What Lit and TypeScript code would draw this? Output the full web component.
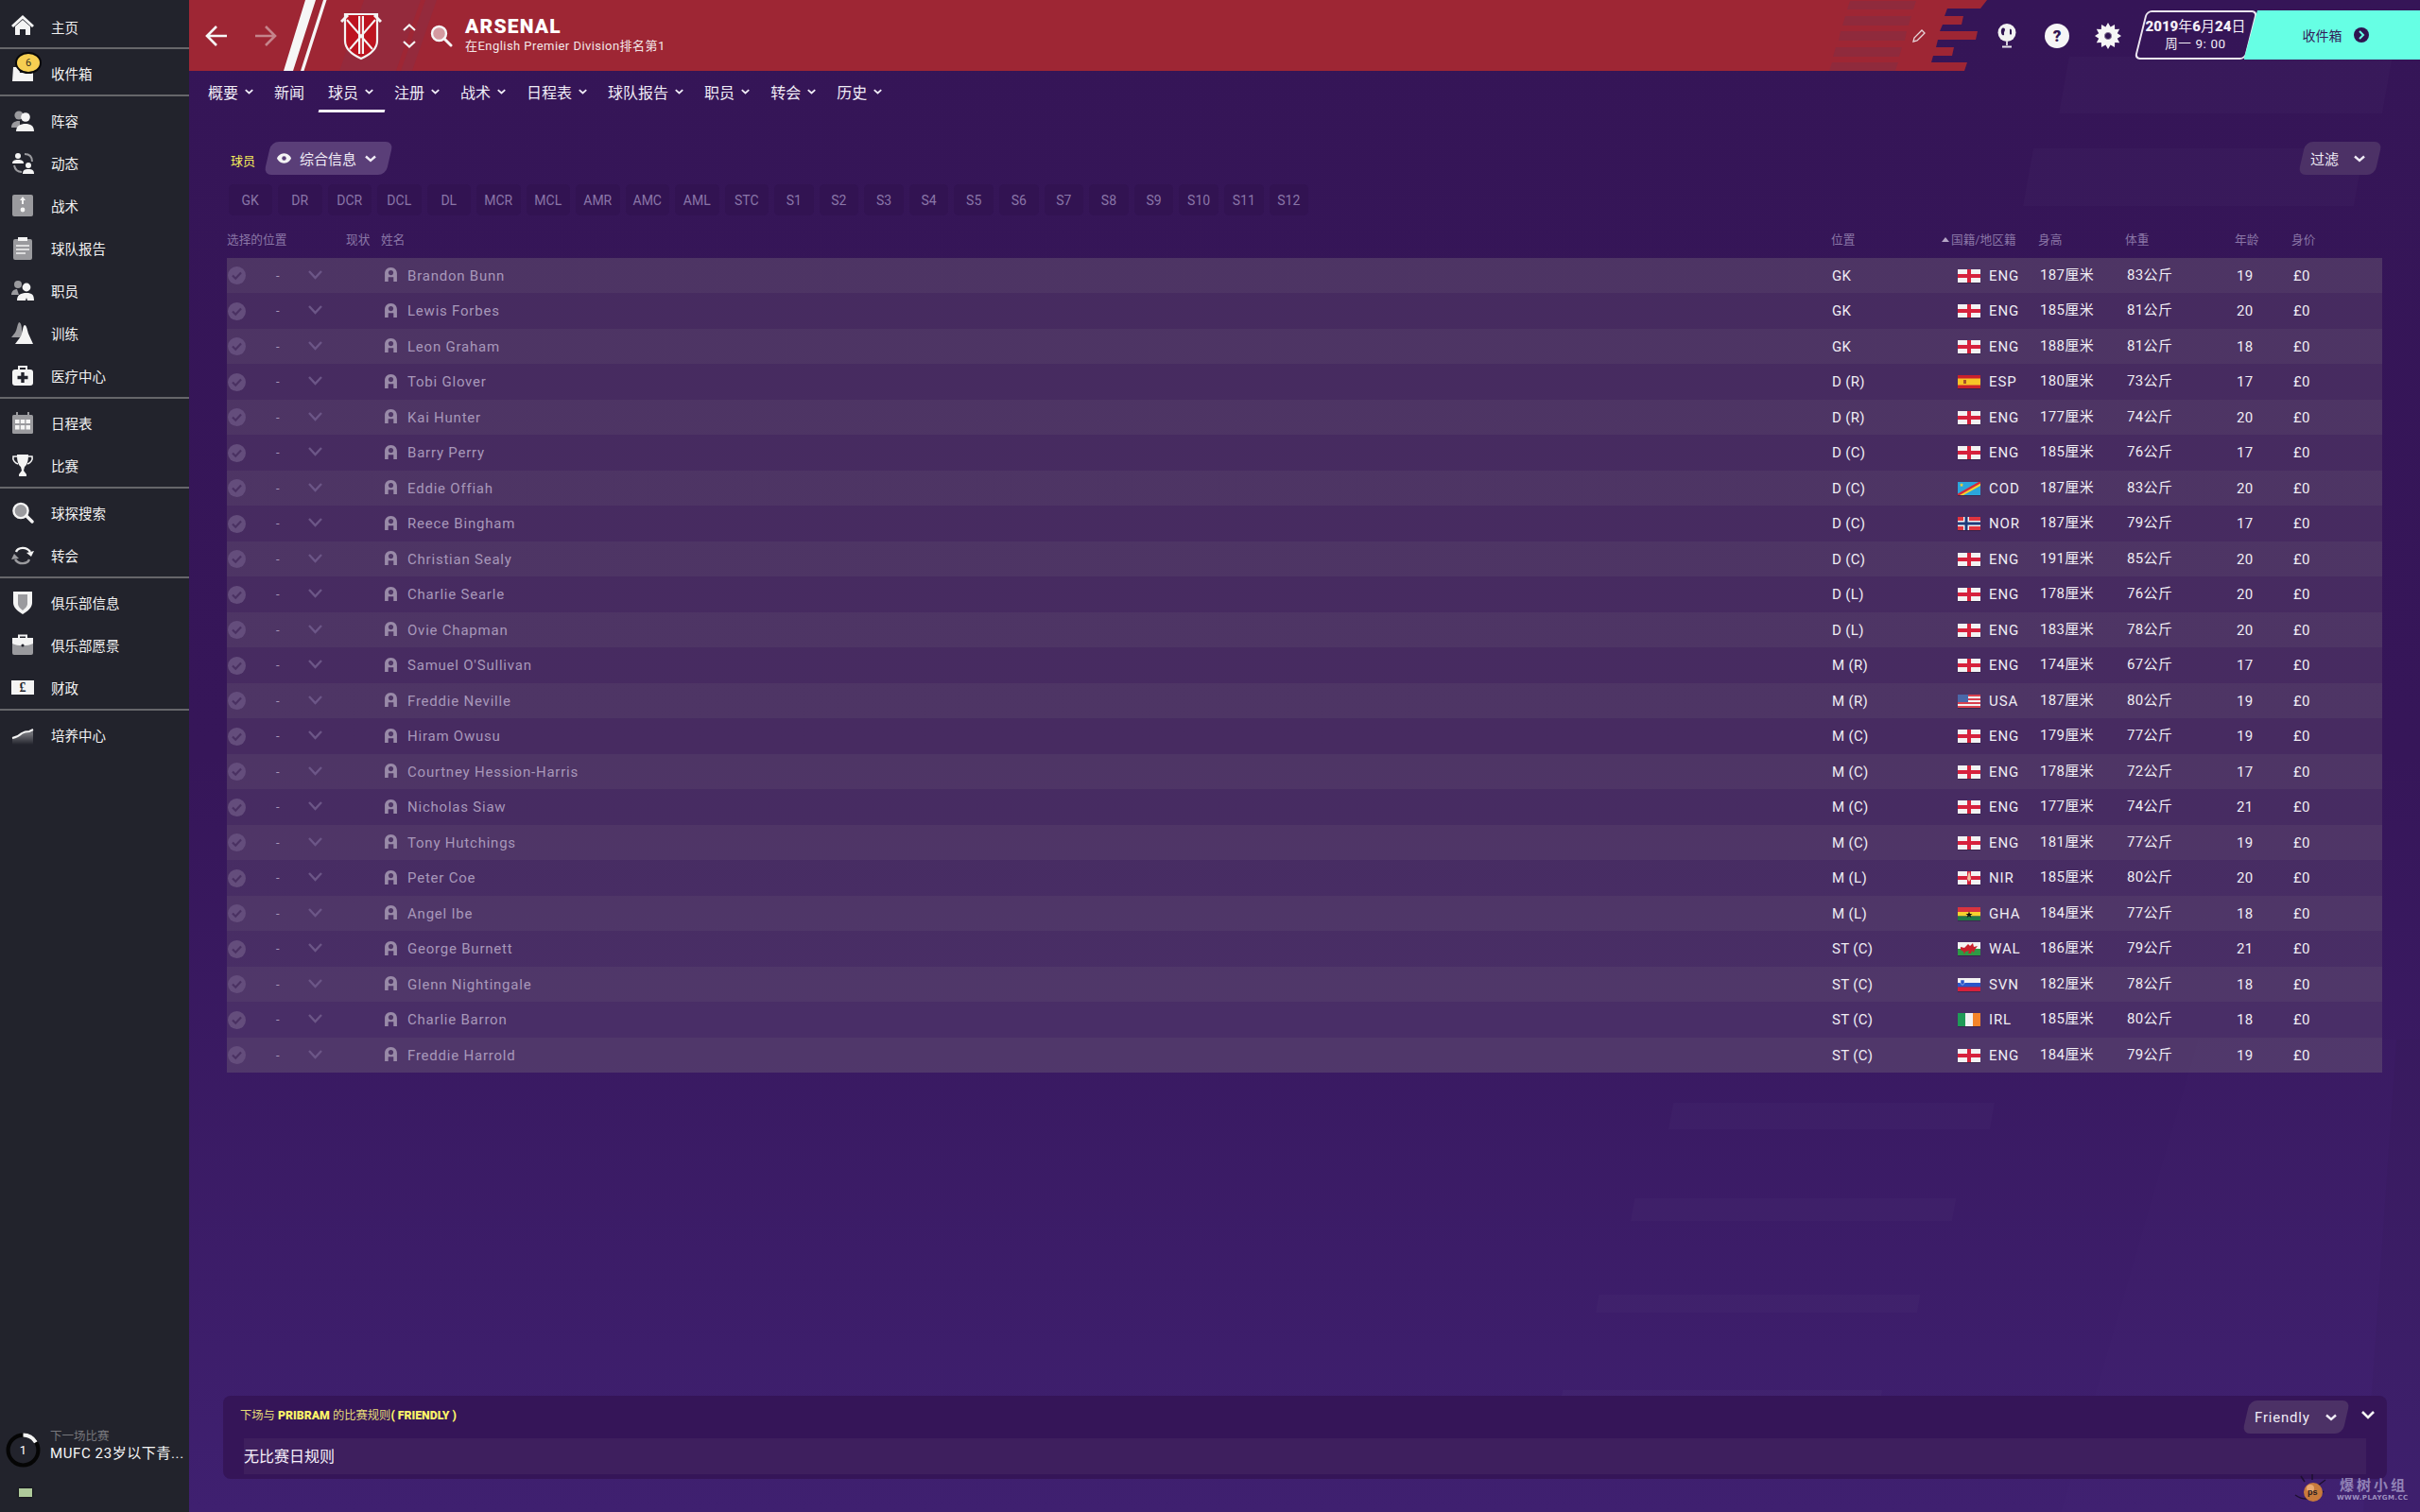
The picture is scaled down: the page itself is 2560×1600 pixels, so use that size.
import { LitElement, html, css, svg } from "lit";
import { customElement } from "lit/decorators.js";

const W = "#f4f4f4";
const G = "#9a9a9e";
const icons: Record<string, any> = {
  home: svg`<path fill="${W}" d="M12 0 0 11l2 2L12 4l10 9 2-2z"/><path fill="${W}" d="M4 12l8-7 8 7v9h-5v-6H9v6H4z"/>`,
  inbox: svg`<path fill="${W}" d="M2 5h6l1 6h7l4-6h3v15H1z"/><path fill="${G}" d="M6 0h13l-3 8H9z"/>`,
  squad: svg`<circle cx="8" cy="6" r="4.6" fill="${G}"/><path fill="${G}" d="M0 19c0-5 3-6 6-7l3 0v7z"/><circle cx="15" cy="8" r="4.8" fill="${W}"/><path fill="${W}" d="M5 23c0-6 5-8 10-8s9 2 9 8z"/>`,
  dyn: svg`<circle cx="7" cy="4" r="3" fill="${W}"/><path fill="${W}" d="M1 12c0-3 2-4 6-4s6 1 6 4z"/><circle cx="18" cy="14" r="3" fill="${W}"/><path fill="${W}" d="M12 23c0-4 2-5 6-5s6 1 6 5z"/><path fill="none" stroke="${G}" stroke-width="2" d="M14 2c5 0 8 3 8 8M3 14c1 5 4 7 8 7"/>`,
  tac: svg`<rect x="1" y="0" width="22" height="23" rx="2" fill="${G}"/><path fill="${W}" d="M12 2l3 4h-2v4h-2V6H9z"/><circle cx="12" cy="16" r="2.4" fill="${W}"/>`,
  rep: svg`<rect x="2" y="2" width="20" height="22" rx="2" fill="${G}"/><rect x="7" y="0" width="10" height="4" fill="${W}"/><path stroke="${W}" stroke-width="1.5" d="M5 9h14M5 13h14M5 17h10"/>`,
  staff: svg`<circle cx="7" cy="5" r="4" fill="${G}"/><path fill="${G}" d="M0 16c0-4 3-6 6-6l2 6z"/><circle cx="16" cy="8" r="4.4" fill="${W}"/><path fill="${W}" d="M6 22c0-6 4-8 10-8s8 2 8 8h-7l-1-3-1 3z"/>`,
  train: svg`<path fill="${G}" d="M8 0c2 0 3 4 3 8l2 8H0l4-5c2-3 2-8 4-11z"/><path fill="${W}" d="M14 3c2 0 3 5 4 9l5 11H4l6-8c2-3 2-12 4-12z"/>`,
  med: svg`<path fill="none" stroke="${W}" stroke-width="2" d="M8 5V2h8v3"/><rect x="1" y="5" width="22" height="17" rx="3" fill="${W}"/><path stroke="#22232c" stroke-width="3.4" d="M12 8v11M6.5 13.5h11"/>`,
  cal: svg`<rect x="1" y="3" width="22" height="20" rx="1.5" fill="${G}"/><path stroke="${G}" stroke-width="2" d="M6 0v4M18 0v4"/><path fill="${W}" d="M4 8h4.5v4H4zm5.8 0h4.4v4H9.8zm5.7 0H20v4h-4.5zM4 14h4.5v4.500H4zm5.800 0h4.400v4.500H9.800zm5.700 0H20v4.500h-4.500z"/>`,
  cup: svg`<path fill="${W}" d="M6 0h12c0 3 0 10-4 13l-1 4 3 4v2H8v-2l3-4-1-4C6 10 6 3 6 0z"/><path fill="none" stroke="${W}" stroke-width="1.600" d="M6 2H2c-1 4 2 7 5 8M18 2h4c1 4-2 7-5 8"/>`,
  search: svg`<circle cx="10" cy="9.500" r="7.600" fill="${G}" stroke="${W}" stroke-width="2.400"/><path stroke="${W}" stroke-width="3.400" stroke-linecap="round" d="M16 15l6 6"/>`,
  trans: svg`<path fill="none" stroke="${W}" stroke-width="2.400" d="M5 8c2-5 11-6 15 0"/><path fill="${W}" d="M24 7l-3 6-5-4z"/><path fill="none" stroke="${G}" stroke-width="2.400" d="M19 16c-2 5-11 6-15 0"/><path fill="${G}" d="M0 16l3-6 5 5z"/>`,
  shield: svg`<path fill="${W}" d="M2 0h20v12c0 5-5 9-10 12C7 21 2 17 2 12z"/><path fill="${G}" d="M7 3h10v10c0 3-3 5-5 7-2-2-5-4-5-7z"/>`,
  brief: svg`<path fill="none" stroke="${W}" stroke-width="2" d="M8 5V1.500h8V5"/><rect x="1" y="4" width="22" height="18" rx="2" fill="${G}"/><path fill="${W}" d="M1 4h22v6c-6 3-16 3-22 0z"/><circle cx="12" cy="12" r="1.600" fill="#22232c"/>`,
  dev: svg`<linearGradient id="dv" x1="0" y1="0" x2="0" y2="1"><stop offset=".3" stop-color="#fff"/><stop offset="1" stop-color="#fff" stop-opacity="0"/></linearGradient><path fill="url(#dv)" d="M1 15c5-1 7-2 10-5 3-2 6-2 8-2l4-2v16H1z" opacity=".35"/><path fill="none" stroke="${W}" stroke-width="2" d="M1 15c5-1 7-2 10-5 3-2 6-2 8-2l4-2"/>`,
};

const side: (null | [string, string])[] = [
  ["home", "主页"], null, ["inbox", "收件箱"], null,
  ["squad", "阵容"], ["dyn", "动态"], ["tac", "战术"], ["rep", "球队报告"], ["staff", "职员"], ["train", "训练"], ["med", "医疗中心"], null,
  ["cal", "日程表"], ["cup", "比赛"], null,
  ["search", "球探搜索"], ["trans", "转会"], null,
  ["shield", "俱乐部信息"], ["brief", "俱乐部愿景"], ["money", "财政"], null,
  ["dev", "培养中心"],
];

const flags: Record<string, any> = {
  ENG: svg`<rect width="24" height="14" fill="#f2f2f2"/><path fill="#d6213c" d="M10 0h4v14h-4zM0 5h24v4H0z"/>`,
  ESP: svg`<rect width="24" height="14" fill="#c9202c"/><rect y="3.500" width="24" height="7" fill="#f6c427"/><rect x="6" y="5" width="3" height="4" fill="#a5502c"/>`,
  COD: svg`<rect width="24" height="14" fill="#2ba6dc"/><path fill="#f6d22e" d="M0 14 24 1v3L6 14zM24 0v1L0 14v-1z"/><path fill="#d6283a" d="M0 12.500 22 0h2v1.500L2 14H0z"/><path fill="#f6d22e" d="M4 1l.7 1.500 1.500.1-1.200 1 .4 1.500L4 4.300 2.700 5.100l.4-1.500-1.200-1 1.500-.1z"/>`,
  NOR: svg`<rect width="24" height="14" fill="#e0353f"/><path fill="#f2f2f2" d="M6 0h6v14H6zM0 4h24v6H0z"/><path fill="#1f3a7a" d="M7.500 0h3v14h-3zM0 5.500h24v3H0z"/>`,
  USA: svg`<rect width="24" height="14" fill="#f2f2f2"/><path fill="#d8404e" d="M0 0h24v2H0zm0 4h24v2H0zm0 4h24v2H0zm0 4h24v2H0z"/><rect width="11" height="8" fill="#4a68a8"/>`,
  NIR: svg`<rect width="24" height="14" fill="#f2f2f2"/><path fill="#d6213c" d="M10 0h4v14h-4zM0 5h24v4H0z"/><path fill="#f0c0a0" d="M11 3l1-3 1 3 1 5-2 3-2-3z"/>`,
  GHA: svg`<rect width="24" height="5" fill="#d8343f"/><rect y="5" width="24" height="4.500" fill="#f6d22e"/><rect y="9.500" width="24" height="4.500" fill="#1f7a45"/><path fill="#111" d="M12 4.500l1 2.500 2.500.1-2 1.500.8 2.400-2.300-1.400-2.300 1.400.8-2.400-2-1.500 2.500-.1z"/>`,
  WAL: svg`<rect width="24" height="7" fill="#f2f2f2"/><rect y="7" width="24" height="7" fill="#2e9a45"/><path fill="#c9202c" d="M3 5l4 1 4-4 2 2 3-3 1 4 4-1-3 4-1 3-2-2-1 3h-3l1-3-4 1-1 3-1-3-3-2z"/>`,
  SVN: svg`<rect width="24" height="5" fill="#f2f2f2"/><rect y="5" width="24" height="4.500" fill="#2a55c8"/><rect y="9.500" width="24" height="4.500" fill="#d6213c"/><path fill="#2a55c8" d="M3 2h4v3c0 1-1 2-2 2S3 6 3 5z" stroke="#f2f2f2" stroke-width=".5"/>`,
  IRL: svg`<rect width="8" height="14" fill="#1f9a57"/><rect x="8" width="8" height="14" fill="#f2f2f2"/><rect x="16" width="8" height="14" fill="#f5842a"/>`,
};

const players: string[][] = [
  ["Brandon Bunn","GK","ENG","187","83","19"],["Lewis Forbes","GK","ENG","185","81","20"],["Leon Graham","GK","ENG","188","81","18"],
  ["Tobi Glover","D (R)","ESP","180","73","17"],["Kai Hunter","D (R)","ENG","177","74","20"],["Barry Perry","D (C)","ENG","185","76","17"],
  ["Eddie Offiah","D (C)","COD","187","83","20"],["Reece Bingham","D (C)","NOR","187","79","17"],["Christian Sealy","D (C)","ENG","191","85","20"],
  ["Charlie Searle","D (L)","ENG","178","76","20"],["Ovie Chapman","D (L)","ENG","183","78","20"],["Samuel O'Sullivan","M (R)","ENG","174","67","17"],
  ["Freddie Neville","M (R)","USA","187","80","19"],["Hiram Owusu","M (C)","ENG","179","77","19"],["Courtney Hession-Harris","M (C)","ENG","178","72","17"],
  ["Nicholas Siaw","M (C)","ENG","177","74","21"],["Tony Hutchings","M (C)","ENG","181","77","19"],["Peter Coe","M (L)","NIR","185","80","20"],
  ["Angel Ibe","M (L)","GHA","184","77","18"],["George Burnett","ST (C)","WAL","186","79","21"],["Glenn Nightingale","ST (C)","SVN","182","78","18"],
  ["Charlie Barron","ST (C)","IRL","185","80","18"],["Freddie Harrold","ST (C)","ENG","184","79","19"],
];

const nav: [string, boolean][] = [["概要",true],["新闻",false],["球员",true],["注册",true],["战术",true],["日程表",true],["球队报告",true],["职员",true],["转会",true],["历史",true]];
const posBtns = ["GK","DR","DCR","DCL","DL","MCR","MCL","AMR","AMC","AML","STC"];
const sBtns = ["S1","S2","S3","S4","S5","S6","S7","S8","S9","S10","S11","S12"];

const chev = (cls = "chev") => html`<svg class=${cls} viewBox="0 0 12 8"><path d="M1 1.500 6 6l5-4.500" fill="none" stroke="currentColor" stroke-width="2.400"/></svg>`;

const decor: number[][] = [
  [2140,157,2490,218],[1765,1167,2105,1195],[1725,1268,2065,1292],[1688,1370,2028,1389],[1652,1471,1990,1477],
  [2178,60,2520,120],
];

@customElement("app-root")
export class AppRoot extends LitElement {
  static styles = css`
    :host { display: block; width: 2560px; height: 1600px; overflow: hidden; font-family: Roboto, "Noto Sans CJK SC", sans-serif; color: #f0edf4; }
    * { box-sizing: border-box; }
    .page { display: flex; width: 2560px; height: 1600px; }
    .side { width: 200px; flex: none; background: #22232c; display: flex; flex-direction: column; position: relative; color: #f2f2f2; }
    .si { height: 45px; display: flex; align-items: center; font-size: 14.500px; padding-left: 12px; flex: none; }
    .si svg { width: 24px; height: 24px; margin-right: 18px; flex: none; }
    .sep { height: 2px; background: #66666a; margin: 0 0 3px; flex: none; }
    .si.first { height: 50px; padding-top: 6px; }
    .si.inb { position: relative; }
    .money { width: 24px; height: 15px; margin-right: 18px; background: #f4f4f4; display: flex; align-items: center; justify-content: center; color: #22232c; font: 700 14px "Liberation Serif", serif; flex: none; }
    .badge { position: absolute; left: 16px; top: 0; width: 28px; height: 23px; border-radius: 50%; background: #f6cf52; border: 2.500px solid #08080a; color: #3a3320; font-size: 11px; display: flex; align-items: center; justify-content: center; }
    .next { position: absolute; left: 0; right: 0; bottom: 0; height: 95px; }
    .ring { position: absolute; left: 6px; top: 11px; width: 37px; height: 37px; }
    .ring-n { position: absolute; left: 6px; top: 11px; width: 37px; height: 37px; display: flex; align-items: center; justify-content: center; font-size: 13px; color: #fff; }
    .nx1 { position: absolute; left: 53px; top: 7px; font-size: 12.500px; line-height: 16px; color: #77777c; }
    .nx2 { position: absolute; left: 53px; top: 23px; font-size: 15px; line-height: 20px; letter-spacing: .6px; color: #f6f6f6; white-space: nowrap; }
    .sq { position: absolute; left: 20px; bottom: 16px; width: 14px; height: 9px; background: #aec99a; box-shadow: 0 0 2px #000; }

    .main { flex: 1; position: relative; display: flex; flex-direction: column; background: linear-gradient(180deg, #351557 0%, #361659 50%, #3f2070 100%); }
    .decor { position: absolute; left: -200px; top: 0; width: 2560px; height: 1600px; pointer-events: none; }
    .main > :not(.decor) { position: relative; }

    .head { height: 75px; flex: none; display: flex; align-items: center; padding-left: 17px; }
    .hbg { position: absolute; left: 0; top: 0; width: 2360px; height: 75px; }
    .arrow { width: 24px; height: 24px; flex: none; position: relative; }
    .arrow.dim { margin-left: 28px; opacity: .45; }
    .crest { width: 44px; height: 52px; margin-left: 67px; flex: none; position: relative; }
    .updown { width: 14px; margin-left: 22px; display: flex; flex-direction: column; gap: 10px; color: #f4f4f4; position: relative; }
    .updown svg { width: 14px; height: 8px; display: block; }
    .hsearch { width: 24px; height: 24px; margin-left: 15px; flex: none; position: relative; }
    .htitle { margin-left: 13px; display: flex; flex-direction: column; width: 400px; position: relative; }
    .club { font-size: 21px; font-weight: 900; letter-spacing: 1.200px; line-height: 24px; color: #fff; margin-top: -2px; }
    .sub { font-size: 13px; line-height: 18px; letter-spacing: .45px; color: #f3e6e8; white-space: nowrap; }
    .pencil { position: absolute; left: 1822px; top: 30px; width: 16px; height: 16px; }
    .hicon { position: absolute; top: 24px; width: 28px; height: 28px; }
    .globe { left: 1909px; }
    .gear { left: 2016px; }
    .qm { position: absolute; left: 1963px; top: 25px; width: 26px; height: 26px; border-radius: 50%; background: #f6f6f6; color: #2f1450; font-weight: 900; font-size: 17px; display: flex; align-items: center; justify-content: center; }
    .clock { position: absolute; left: 2057px; top: 11px; width: 303px; height: 52px; display: flex; }
    .date { width: 131px; flex: none; position: relative; display: flex; flex-direction: column; align-items: center; justify-content: center; color: #f4eff7; }
    .date::before { content: ""; position: absolute; top: 0; bottom: 0; left: 6.500px; right: 6.500px; border: 2px solid #ece6f0; border-radius: 6px; transform: skewX(-14deg); }
    .d1 { font-size: 15px; line-height: 19px; position: relative; white-space: nowrap; }
    .d1 b { font-weight: 900; }
    .d2 { font-size: 13.500px; line-height: 17px; position: relative; letter-spacing: .6px; }
    .mint { width: 186.500px; margin-left: -14.500px; background: #66ffe4; clip-path: polygon(14.500px 0, 100% 0, 100% 100%, 0 100%); color: #34205a; font-size: 14px; display: flex; align-items: center; padding-left: 62px; gap: 12px; }
    .goc { width: 16px; height: 16px; flex: none; }

    .nav { height: 45px; flex: none; display: flex; align-items: center; padding-left: 20px; gap: 22px; font-size: 16px; color: #f0ecf6; }
    .navi { display: flex; align-items: center; height: 45px; position: relative; padding-bottom: 2px; }
    .navi .chev { width: 9px; height: 6px; margin-left: 7px; }
    .navi.plain { margin-right: 3px; }
    .navi.on::after { content: ""; position: absolute; left: -10px; right: -12px; bottom: 1px; height: 3px; background: #f4f0f8; transform: skewX(-14deg); }
    .chev { width: 12px; height: 8px; }

    .content { flex: 1; padding: 30px 0 0 40px; display: flex; flex-direction: column; }
    .trow { height: 35px; display: flex; align-items: center; position: relative; width: 2280px; flex: none; }
    .plabel { font-size: 13px; color: #f6ee5a; margin-left: 4px; width: 35px; position: relative; top: 2px; }
    .pill { position: relative; height: 35px; display: flex; align-items: center; font-size: 15px; color: #f0ecf6; z-index: 0; }
    .pill::before { content: ""; position: absolute; inset: 0 4px; border-radius: 8px; background: var(--pb, #5a3e78); transform: skewX(-13deg); z-index: -1; }
    .p1 { width: 137px; padding-left: 14px; }
    .p1 .eye { width: 15px; height: 11px; margin-right: 9px; }
    .p1 .chev { margin-left: 9px; }
    .p2 { --pb: #4c3166; width: 89px; margin-left: auto; padding-left: 13px; }
    .p2 .chev { margin-left: 16px; }
    .filters { display: flex; gap: 6px; margin-top: 10px; height: 33px; flex: none; padding-left: 1.500px; }
    .fb { height: 33px; border-radius: 5px; background: #321352; color: #8a76a8; font-size: 14px; display: flex; align-items: center; justify-content: center; flex: none; width: 46.500px; }
    .fb.s { width: 41.600px; }
    .thead { height: 45px; flex: none; display: grid; grid-template-columns: 126px 37px 1534px 117px 102px 92px 116px 60px 94px; font-size: 12.700px; color: #8a76a6; align-items: end; padding-bottom: 10px; line-height: 18px; }
    .thead .nw { white-space: nowrap; }
    .tri { display: inline-block; width: 0; height: 0; border: 4px solid transparent; border-top: 0; border-bottom: 5px solid #b3a4c4; margin: 0 2px 2px 0; }
    .row { display: grid; grid-template-columns: 52px 34px 80px 25px 1507px 133px 33px 54px 92px 116px 60px 94px; align-items: center; width: 2280px; height: 38px; font-size: 15px; line-height: 18px; letter-spacing: .35px; background: rgba(115,100,120,.28); }
    .row.o { height: 37px; background: rgba(115,100,120,.4); }
    .ck { width: 19px; height: 19px; margin-left: 1px; }
    .da { color: #a796b8; font-size: 13px; }
    .rc { width: 15px; height: 10px; color: #6c5687; position: relative; top: -1px; }
    .pr { width: 15px; height: 15px; position: relative; top: -1px; }
    .nm { color: #a898ba; white-space: nowrap; letter-spacing: .78px; }
    .nat { letter-spacing: .9px; }
    .cj { position: relative; top: -1px; }
    .fl { width: 24px; height: 14px; display: block; box-shadow: 0 1px 0 rgba(0,0,0,.25); }

    .rules { position: absolute !important; left: 36px; top: 1477px; width: 2289px; height: 88px; background: #351558; border-radius: 8px; }
    .rt { position: absolute; left: 18px; top: 12px; font-size: 12.300px; line-height: 18px; color: #e6dc78; white-space: nowrap; }
    .rt b { font-weight: 900; color: #fcf468; }
    .rbox { position: absolute; left: 22px; right: 22px; top: 45px; height: 38px; background: #3e1f5e; display: flex; align-items: center; font-size: 16px; color: #f6f0fa; padding-bottom: 2px; }
    .p3 { position: absolute !important; left: 2136px; top: 5px; width: 114px; --pb: #4c3166; padding-left: 13px; letter-spacing: .8px; }
    .p3 .chev { margin-left: 16px; }
    .rchev { position: absolute; left: 2262px; top: 16px; width: 14px; height: 9px; color: #f4f4f4; }
    .wm { position: absolute !important; left: 2273px; top: 1556px; width: 80px; height: 44px; color: #a79cc8; }
    .wm1 { position: absolute; left: 2px; top: 5px; font: 700 15px/20px "Noto Sans CJK SC", serif; letter-spacing: 3px; white-space: nowrap; opacity: .8; }
    .wm2 { position: absolute; left: -1px; top: 24px; font: 700 7px/10px "DejaVu Sans", sans-serif; letter-spacing: .4px; white-space: nowrap; opacity: .9; }
    .orb { position: absolute !important; left: 2226px; top: 1560px; width: 40px; height: 36px; }
    .orbt { position: absolute !important; left: 2241px; top: 1574px; font: 700 9px/10px "Liberation Sans", sans-serif; color: #2a1a20; }
  `;

  private sideItems() {
    return side.map((s) => {
      if (!s) return html`<div class="sep"></div>`;
      const [ic, t] = s;
      const cls = ic === "home" ? "si first" : ic === "inbox" ? "si inb" : "si";
      return html`<div class=${cls}>
        ${ic === "money"
          ? html`<div class="money">£</div>`
          : html`<svg viewBox="0 0 24 24">${icons[ic]}</svg>`}
        <span>${t}</span>
        ${ic === "inbox" ? html`<div class="badge">6</div>` : ""}
      </div>`;
    });
  }

  render() {
    return html`<div class="page">
      <aside class="side">
        ${this.sideItems()}
        <div class="next">
          <svg class="ring" viewBox="0 0 36 36"><circle cx="18" cy="18" r="15.500" fill="none" stroke="#050505" stroke-width="4"/><path d="M18 2.500A15.500 15.500 0 0 1 31 10" fill="none" stroke="#f4f4f4" stroke-width="4"/></svg>
          <div class="ring-n">1</div>
          <div class="nx1">下一场比赛</div>
          <div class="nx2">MUFC 23岁以下青...</div>
          <div class="sq"></div>
        </div>
      </aside>
      <main class="main">
        <svg class="decor" viewBox="0 0 2560 1600">
          ${decor.map(([a,b,c,d]) => svg`<path fill="#fff" fill-opacity=".02" d="M${a+(d-b)*.18} ${b}H${c+(d-b)*.18}L${c} ${d}H${a}z"/>`)}
          <path fill="#fff" fill-opacity=".008" d="M2325 1100H2560V1600H2180z"/>
          <path fill="#000" fill-opacity=".03" d="M2535 1100h25v500h-60z"/>
        </svg>
        <header class="head">
          <svg class="hbg" viewBox="0 0 2360 75">
            <path fill="#9e2634" d="M0 0H1902L1895 9H1860L1857 17H1877L1875 26H1855L1852 33H1892L1890 42H1850L1848 50H1867L1865 59H1845L1843 66H1881L1878 75H0z"/>
            <path fill="#942a3c" d="M185 0h60l-26 75h-60zM250 0h12l-26 75h-12z"/>
            <path fill="#8f2a3c" d="M1757 1h70l-3 9h-70zM1752 17h70l-3 10h-70zM1747 33h70l-2 10h-70zM1742 50h70l-3 10h-70zM1738 66h70l-3 9h-70z"/>
            <path fill="#f6f6f6" d="M123 0h11l-24 75H100zM142 0h3.500l-24 75H118z"/>
          </svg>
          <svg class="arrow" viewBox="0 0 24 24"><path d="M12 2 2 12l10 10M2 12h21" fill="none" stroke="#f6f6f6" stroke-width="2.600"/></svg>
          <svg class="arrow dim" viewBox="0 0 24 24"><path d="M12 2l10 10-10 10M22 12H1" fill="none" stroke="#f6f6f6" stroke-width="2.600"/></svg>
          <svg class="crest" viewBox="0 0 44 52">
            <path fill="#bd1420" stroke="#f4f4f4" stroke-width="2.200" d="M5 3h34v28c0 9-8 15-17 19C13 46 5 40 5 31z"/>
            <path fill="#f4f4f4" d="M19 5h6v40h-6z"/><path fill="#bd1420" d="M21.200 5h1.600v40h-1.600z"/>
            <path stroke="#f4f4f4" stroke-width="2" d="M7 9l27 31M37 9 10 40"/>
            <path stroke="#f4f4f4" stroke-width="3" d="M1 11l7-7M43 11l-7-7"/>
          </svg>
          <div class="updown">
            <svg viewBox="0 0 14 8"><path d="M1 7l6-5.500L13 7" fill="none" stroke="currentColor" stroke-width="2.200"/></svg>
            <svg viewBox="0 0 14 8"><path d="M1 1l6 5.500L13 1" fill="none" stroke="currentColor" stroke-width="2.200"/></svg>
          </div>
          <svg class="hsearch" viewBox="0 0 24 24"><circle cx="9.500" cy="9.500" r="7.500" fill="#d49aa0" stroke="#f6f6f6" stroke-width="2.400"/><path stroke="#f6f6f6" stroke-width="3" stroke-linecap="round" d="M15 15l7 7"/></svg>
          <div class="htitle">
            <div class="club">ARSENAL</div>
            <div class="sub">在English Premier Division排名第1</div>
          </div>
          <svg class="pencil" viewBox="0 0 16 16"><path d="M2 14l1-4 8-8 3 3-8 8z" fill="none" stroke="#e6d4d8" stroke-width="1.300"/></svg>
          <svg class="hicon globe" viewBox="0 0 28 28"><circle cx="14" cy="10.500" r="9.500" fill="#f2f2f2"/><path fill="#2f1450" d="M9 6c1.500-1 3 0 3 1.500S10.500 10 11 12s-2 1.500-2.600 0S7.500 7 9 6zM17 7c1-.5 2 .3 2 1.500v3.500c-.8 1.300-2 .8-2-.7z"/><path d="M14 20v4M9 25.500h10" stroke="#e6e2ea" stroke-width="1.800"/></svg>
          <div class="qm">?</div>
          <svg class="hicon gear" viewBox="0 0 28 28"><path fill="#f6f6f6" d="M14 0l2.600 4.400 4.400-2.400.2 5 5-.2-2.400 4.400L28 14l-4.200 2.800 2.400 4.400-5-.2-.2 5-4.400-2.400L14 28l-2.600-4.400-4.400 2.400-.2-5-5 .2 2.400-4.400L0 14l4.200-2.800L1.800 6.800l5 .2.200-5 4.400 2.400z"/><circle cx="14" cy="14" r="3.600" fill="#2f1450" stroke="#8a7a9a" stroke-width="1"/></svg>
          <div class="clock">
            <div class="date">
              <div class="d1"><b>2019</b>年<b>6</b>月<b>24</b>日</div>
              <div class="d2">周一 9: 00</div>
            </div>
            <div class="mint">
              <span>收件箱</span>
              <svg class="goc" viewBox="0 0 16 16"><circle cx="8" cy="8" r="8" fill="#2f1450"/><path d="M6 4l4 4-4 4" fill="none" stroke="#66ffe4" stroke-width="2"/></svg>
            </div>
          </div>
        </header>
        <nav class="nav">
          ${nav.map(([t, c]) => html`<div class="navi ${c ? "" : "plain"} ${t === "球员" ? "on" : ""}">${t}${c ? chev() : ""}</div>`)}
        </nav>
        <section class="content">
          <div class="trow">
            <div class="plabel">球员</div>
            <div class="pill p1">
              <svg class="eye" viewBox="0 0 16 11"><path fill="#f4f4f4" d="M8 0c4 0 7 3 8 5.500C15 8 12 11 8 11S1 8 0 5.500C1 3 4 0 8 0z"/><circle cx="8" cy="5.500" r="2.400" fill="#5a3e78"/></svg>
              综合信息${chev()}
            </div>
            <div class="pill p2">过滤${chev()}</div>
          </div>
          <div class="filters">
            ${posBtns.map((b) => html`<div class="fb">${b}</div>`)}
            ${sBtns.map((b) => html`<div class="fb s">${b}</div>`)}
          </div>
          <div class="thead">
            <div class="nw">选择的位置</div><div>现状</div><div>姓名</div><div>位置</div>
            <div class="nw"><span class="tri"></span>国籍/地区籍</div><div>身高</div><div>体重</div><div>年龄</div><div>身价</div>
          </div>
          ${players.map((p, i) => html`<div class="row ${i % 2 === 0 ? "o" : ""}">
            <svg class="ck" viewBox="0 0 19 19"><circle cx="9.500" cy="9.500" r="9.500" fill="#644d7c"/><path d="M5 9.500l3.200 3.200L14 6.500" fill="none" stroke="#4a3162" stroke-width="2.200"/></svg>
            <div class="da">-</div>
            <svg class="rc" viewBox="0 0 15 10"><path d="M1 1l6.500 7L14 1" fill="none" stroke="currentColor" stroke-width="2.400"/></svg>
            <svg class="pr" viewBox="0 0 14 14"><path fill="#998aa8" d="M7 0c4 0 6 3 6 6v8h-3.400V9.500H4.400V14H1V6c0-3 2-6 6-6z"/><circle cx="7" cy="5.200" r="2.400" fill="#4e3665"/></svg>
            <div class="nm">${p[0]}</div>
            <div>${p[1]}</div>
            <svg class="fl" viewBox="0 0 24 14">${flags[p[2]]}</svg>
            <div class="nat">${p[2]}</div>
            <div class="cj">${p[3]}厘米</div>
            <div class="cj">${p[4]}公斤</div>
            <div>${p[5]}</div>
            <div>£0</div>
          </div>`)}
        </section>
        <div class="rules">
          <div class="rt">下场与 <b>PRIBRAM</b> 的比赛规则<b>( FRIENDLY )</b></div>
          <div class="rbox">无比赛日规则</div>
          <div class="pill p3">Friendly${chev()}</div>
          <svg class="rchev" viewBox="0 0 14 9"><path d="M1 1l6 6 6-6" fill="none" stroke="currentColor" stroke-width="2.600"/></svg>
        </div>
        <svg class="orb" viewBox="0 0 40 36"><path d="M8 2l4 6M20 0v6M34 6l-8 6M2 22c8 6 20 6 30-4" fill="none" stroke="#1e1030" stroke-width="1.500"/><circle cx="21" cy="19" r="10" fill="#c87a3c"/><circle cx="18" cy="15" r="4" fill="#e8a870"/></svg>
        <div class="orbt">ps</div>
        <div class="wm"><div class="wm1">爆树小组</div><div class="wm2">WWW.PLAYGM.CC</div></div>
      </main>
    </div>`;
  }
}
